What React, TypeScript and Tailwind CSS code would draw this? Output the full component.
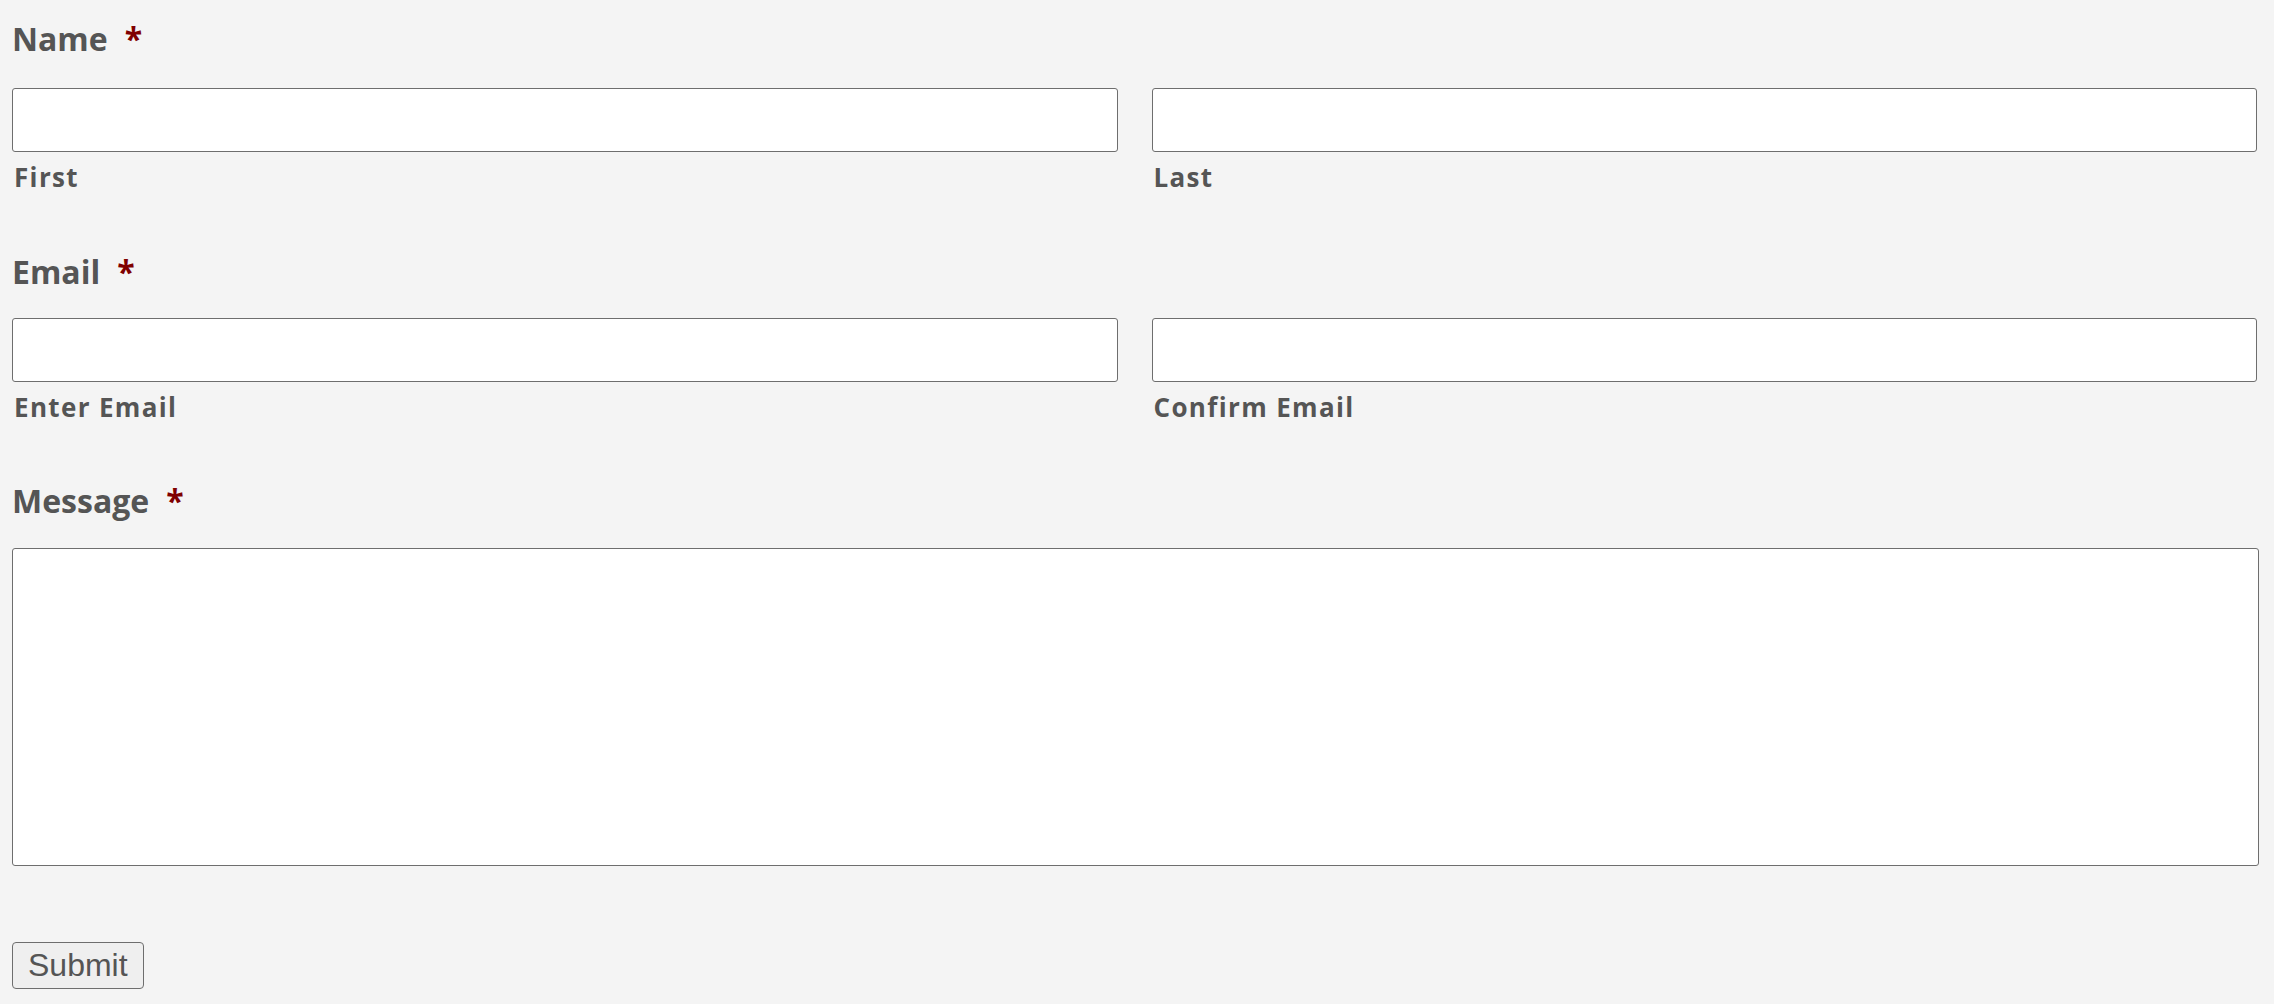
import type { ReactNode } from 'react'

function Heading({ children }: { children: ReactNode }) {
  return (
    <div className="flex h-[40px] items-center text-[32px] leading-[40px] font-bold text-[#555555]">
      <span>{children}</span>
      <span className="ml-[17px] text-[#800000]">*</span>
    </div>
  )
}

function SubLabel({ children }: { children: ReactNode }) {
  return (
    <div className="mt-[9px] h-[32px] pl-[2px] text-[26px] leading-[32px] font-bold tracking-[1.35px] text-[#555555]">
      {children}
    </div>
  )
}

function TextInput({ label, type = 'text' }: { label: string; type?: string }) {
  return (
    <div className="flex flex-col">
      <input
        type={type}
        className="h-[64px] w-full rounded-[3px] border border-[#6e6e6e] bg-white px-3 text-[26px] outline-none"
      />
      <SubLabel>{label}</SubLabel>
    </div>
  )
}

export default function App() {
  return (
    <div
      className="min-h-screen bg-[#f4f4f4] pt-[19px] pr-[17px] pl-[12px]"
      style={{ fontFamily: '"Open Sans", "Liberation Sans", sans-serif' }}
    >
      <form onSubmit={(e) => e.preventDefault()}>
        <Heading>Name</Heading>
        <div className="mt-[29px] grid grid-cols-2 gap-x-[34px]">
          <TextInput label="First" />
          <TextInput label="Last" />
        </div>

        <div className="mt-[59px]">
          <Heading>Email</Heading>
        </div>
        <div className="mt-[26px] grid grid-cols-2 gap-x-[34px]">
          <TextInput label="Enter Email" type="email" />
          <TextInput label="Confirm Email" type="email" />
        </div>

        <div className="mt-[58px]">
          <Heading>Message</Heading>
        </div>
        <textarea className="mt-[27px] block h-[318px] w-[calc(100%+2px)] resize-none rounded-[3px] border border-[#6e6e6e] bg-white p-3 text-[26px] outline-none" />

        <button
          type="submit"
          className="mt-[76px] h-[47px] rounded-[4px] border border-[#6e6e6e] bg-[#efefef] px-[15px] text-[32px] leading-[37px] text-[#555555]"
          style={{ fontFamily: '"Liberation Sans", Arial, sans-serif' }}
        >
          Submit
        </button>
      </form>
    </div>
  )
}
